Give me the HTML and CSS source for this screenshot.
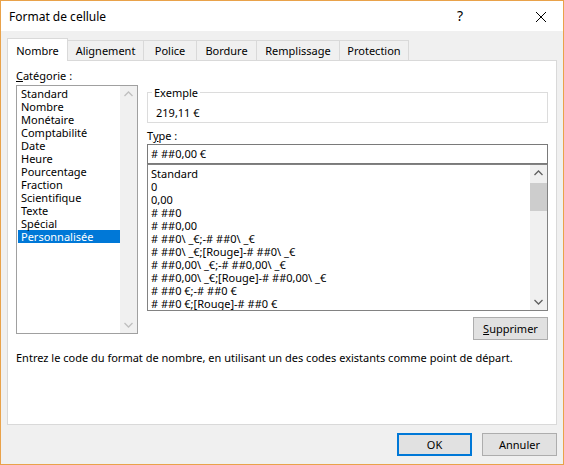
FILE: index.html
```html
<!DOCTYPE html>
<html lang="fr">
<head>
<meta charset="utf-8">
<title>Format de cellule</title>
<link rel="stylesheet" href="styles.css">
</head>
<body>
<div class="window">
  <div class="titlebar">
    <span class="title">Format de cellule</span>
    <span class="help">?</span>
    <span class="close"><svg width="12" height="12" viewBox="0 0 12 12"><path d="M1 1 L11 11 M11 1 L1 11" stroke="#000" stroke-width="1" fill="none"/></svg></span>
  </div>
  <div class="body">
    <div class="tabs">
      <div class="tab active tab-nombre">Nombre</div>
      <div class="tab tab-alignement">Alignement</div>
      <div class="tab tab-police">Police</div>
      <div class="tab tab-bordure">Bordure</div>
      <div class="tab tab-remplissage">Remplissage</div>
      <div class="tab tab-protection">Protection</div>
    </div>
    <div class="panel">
      <div class="cols">
        <div class="left">
          <div class="label"><u>C</u>atégorie :</div>
          <div class="listbox cat">
            <div class="items">
              <div class="item">Standard</div>
              <div class="item">Nombre</div>
              <div class="item">Monétaire</div>
              <div class="item">Comptabilité</div>
              <div class="item">Date</div>
              <div class="item">Heure</div>
              <div class="item">Pourcentage</div>
              <div class="item">Fraction</div>
              <div class="item">Scientifique</div>
              <div class="item">Texte</div>
              <div class="item">Spécial</div>
              <div class="item selected">Personnalisée</div>
            </div>
            <div class="vscroll disabled">
              <span class="arrow"><svg width="17" height="17" viewBox="0 0 17 17"><path d="M4.5 10 L8.5 6 L12.5 10" fill="none" stroke-width="1.3"/></svg></span>
              <span class="track"></span>
              <span class="arrow"><svg width="17" height="17" viewBox="0 0 17 17"><path d="M4.5 7 L8.5 11 L12.5 7" fill="none" stroke-width="1.3"/></svg></span>
            </div>
          </div>
        </div>
        <div class="right">
          <div class="group">
            <div class="legend">Exemple</div>
            <div class="sample">219,11 €</div>
          </div>
          <div class="label type-label">T<u>y</u>pe :</div>
          <div class="input"># ##0,00 €</div>
          <div class="listbox types">
            <div class="items">
              <div class="item">Standard</div>
              <div class="item">0</div>
              <div class="item">0,00</div>
              <div class="item"># ##0</div>
              <div class="item"># ##0,00</div>
              <div class="item"># ##0\ _€;-# ##0\ _€</div>
              <div class="item"># ##0\ _€;[Rouge]-# ##0\ _€</div>
              <div class="item"># ##0,00\ _€;-# ##0,00\ _€</div>
              <div class="item"># ##0,00\ _€;[Rouge]-# ##0,00\ _€</div>
              <div class="item"># ##0 €;-# ##0 €</div>
              <div class="item"># ##0 €;[Rouge]-# ##0 €</div>
            </div>
            <div class="vscroll">
              <span class="arrow"><svg width="17" height="17" viewBox="0 0 17 17"><path d="M4.5 10 L8.5 6 L12.5 10" fill="none" stroke-width="1.3"/></svg></span>
              <span class="track"><span class="thumb"></span></span>
              <span class="arrow"><svg width="17" height="17" viewBox="0 0 17 17"><path d="M4.5 7 L8.5 11 L12.5 7" fill="none" stroke-width="1.3"/></svg></span>
            </div>
          </div>
          <div class="btnrow"><button class="btn"><u>S</u>upprimer</button></div>
        </div>
      </div>
      <p class="desc">Entrez le code du format de nombre, en utilisant un des codes existants comme point de départ.</p>
    </div>
    <div class="footer">
      <button class="btn default">OK</button>
      <button class="btn">Annuler</button>
    </div>
  </div>
</div>
</body>
</html>
```
FILE: styles.css
```css
* { box-sizing: border-box; }
html, body { margin: 0; padding: 0; }
body {
  font-family: "Noto Sans", "Open Sans", sans-serif;
  font-size: 11px;
  color: #000;
  background: #fff;
}
u { text-decoration: underline; text-underline-offset: 1px; }

.window {
  width: 564px;
  height: 465px;
  border: 1px solid #e9a24a;
  display: flex;
  flex-direction: column;
  background: #f0f0f0;
}

.titlebar {
  height: 30px;
  background: #fff;
  display: flex;
  align-items: center;
  padding-left: 8px;
  flex-shrink: 0;
}
.title { font-size: 12px; flex: 1; line-height: 30px; padding-top: 1px; }
.help { font-size: 14px; width: 20px; text-align: center; margin-right: 65px; line-height: 30px; }
.close { width: 12px; height: 12px; display: flex; margin-right: 16px; margin-top: 1px; }

.body {
  flex: 1;
  padding: 7px 6px 0 6px;
  display: flex;
  flex-direction: column;
}

.tabs {
  display: flex;
  align-items: flex-end;
  height: 23px;
  position: relative;
  z-index: 1;
}
.tab {
  height: 21px;
  border: 1px solid #d9d9d9;
  margin-left: -1px;
  background: #f0f0f0;
  padding: 0;
  line-height: 19px;
  text-align: center;
  white-space: nowrap;
}
.tab.active {
  height: 23px;
  margin-left: 0;
  background: #fff;
  border-bottom: none;
  padding-top: 2px;
  line-height: 19px;
  z-index: 2;
  position: relative;
}
.tab-nombre { width: 61px; }
.tab-alignement { width: 77px; }
.tab-police { width: 54px; }
.tab-bordure { width: 61px; }
.tab-remplissage { width: 84px; }
.tab-protection { width: 70px; }

.panel {
  margin-top: -1px;
  height: 365px;
  background: #fff;
  border: 1px solid #d9d9d9;
  padding: 8px 8px 0 8px;
}

.cols { display: flex; gap: 9px; }
.left { width: 122px; }
.right { width: 401px; display: flex; flex-direction: column; }

.label { line-height: 13px; height: 13px; margin-bottom: 3px; }

.listbox {
  border: 1px solid #828282;
  display: flex;
  background: #fff;
}
.listbox.cat { height: 249px; border-color: #a0a0a0; }
.listbox .items { flex: 1; padding: 1px 0 0 1px; overflow: hidden; }
.item { line-height: 13px; height: 13px; padding-left: 3px; white-space: nowrap; }
.item.selected { background: #0078d7; color: #fff; }
.types .items { padding: 2px 0 0 0; }

.vscroll {
  width: 17px;
  background: #f0f0f0;
  display: flex;
  flex-direction: column;
  flex-shrink: 0;
}
.vscroll .arrow { height: 17px; display: flex; }
.vscroll .arrow svg path { stroke: #606060; }
.vscroll.disabled .arrow svg path { stroke: #bfbfbf; }
.vscroll .track { flex: 1; display: flex; flex-direction: column; padding-top: 1px; }
.thumb { height: 28px; background: #cdcdcd; }

.group {
  margin-top: 23px;
  height: 31px;
  border: 1px solid #dcdcdc;
  padding: 0 0 0 4px;
}
.legend {
  width: max-content;
  margin-top: -7px;
  line-height: 13px;
  height: 13px;
  padding: 0 2px;
  background: #fff;
}
.sample { margin-top: 7px; line-height: 13px; height: 13px; padding-left: 4px; }

.type-label { margin-top: 6px; margin-bottom: 2px; }

.input {
  height: 20px;
  border: 1px solid #7a7a7a;
  line-height: 18px;
  padding-left: 3px;
}
.listbox.types { height: 147px; }

.btnrow { display: flex; justify-content: flex-end; margin-top: 6px; }

.btn {
  font-family: inherit;
  font-size: 11px;
  width: 75px;
  height: 23px;
  background: #e1e1e1;
  border: 1px solid #adadad;
  padding: 0;
  color: #000;
  line-height: 20px;
}
.btn.default { border: 2px solid #0078d7; }

.desc { margin: 11px 0 0 0; line-height: 13px; }

.footer {
  display: flex;
  justify-content: flex-end;
  gap: 10px;
  padding-top: 8px;
}
```
